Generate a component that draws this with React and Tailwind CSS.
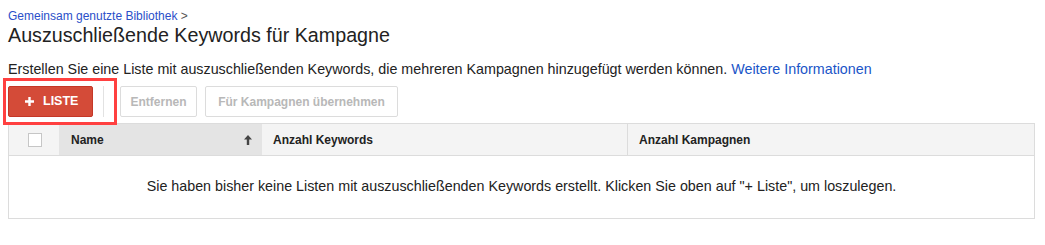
import React from "react";

const font = { fontFamily: '"Liberation Sans", Arial, sans-serif' };

const UpArrow = () => (
    <svg width="8" height="10" viewBox="0 0 8 10" className="block">
        <path d="M4 0 L8 4.5 L5.2 4.5 L5.2 10 L2.8 10 L2.8 4.5 L0 4.5 Z" fill="#444" />
    </svg>
);

const Plus = () => (
    <svg width="9" height="9" viewBox="0 0 9 9" className="block mr-[9px]">
        <path d="M3.3 0 H5.7 V3.3 H9 V5.7 H5.7 V9 H3.3 V5.7 H0 V3.3 H3.3 Z" fill="#fff" />
    </svg>
);

const Toolbar = () => (
    <div className="flex items-center mt-[9px] h-[31px]">
        <div className="relative flex items-center">
            <button className="flex items-center h-[31px] w-[85px] pl-[16px] bg-[#d44b38] border border-[#c53727] rounded-[2px] text-white text-[12.5px] font-bold">
                <Plus />
                LISTE
            </button>
            <div className="ml-[10px] w-px h-[31px] bg-[#e2e2e2]" />
            <div className="absolute left-[-5px] top-[-8px] w-[114px] h-[47px] border-[3px] border-[#ff4040] pointer-events-none" />
        </div>
        <button className="ml-[16px] h-[31px] w-[77px] border border-[#dcdcdc] rounded-[2px] bg-white text-[#b8b8b8] text-[12px] font-bold">
            Entfernen
        </button>
        <button className="ml-[8px] h-[31px] w-[193px] border border-[#dcdcdc] rounded-[2px] bg-white text-[#b8b8b8] text-[12px] font-bold">
            Für Kampagnen übernehmen
        </button>
    </div>
);

const KeywordTable = () => (
    <div className="mt-[6px] w-[1027px] border border-[#dcdcdc]">
        <div className="flex h-[32px] border-b border-[#dcdcdc] bg-[#f4f4f4] text-[12px] font-bold text-[#222]">
            <div className="w-[50px] flex items-center justify-center">
                <div className="w-[14px] h-[14px] bg-white border border-[#c6c6c6] ml-[2px]" />
            </div>
            <div className="w-[203px] flex items-center justify-between bg-[#e4e4e4] pl-[12px] pr-[10px]">
                <span>Name</span>
                <UpArrow />
            </div>
            <div className="w-[366px] flex items-center pl-[11px] border-r border-[#dcdcdc]">
                Anzahl Keywords
            </div>
            <div className="flex-1 flex items-center pl-[11px]">Anzahl Kampagnen</div>
        </div>
        <div className="h-[62px] flex items-center justify-center bg-white text-[14.3px] text-[#222] pb-[1px]">
            Sie haben bisher keine Listen mit auszuschließenden Keywords erstellt. Klicken Sie oben auf "+ Liste", um loszulegen.
        </div>
    </div>
);

export default function App() {
    return (
        <div className="w-[1045px] h-[245px] bg-white pl-[8px] pt-[9px]" style={font}>
            <a className="block text-[12px] leading-[14px] text-[#2a4fc9]">
                Gemeinsam genutzte Bibliothek <span className="text-[#555]">&gt;</span>
            </a>
            <h1 className="text-[19.7px] leading-[22px] text-[#222] mt-[1px]">
                Auszuschließende Keywords für Kampagne
            </h1>
            <p className="mt-[15px] text-[14.3px] leading-[16px] text-[#222]">
                Erstellen Sie eine Liste mit auszuschließenden Keywords, die mehreren Kampagnen hinzugefügt werden können.{" "}
                <a className="text-[#1a55c8]">Weitere Informationen</a>
            </p>
            <Toolbar />
            <KeywordTable />
        </div>
    );
}
